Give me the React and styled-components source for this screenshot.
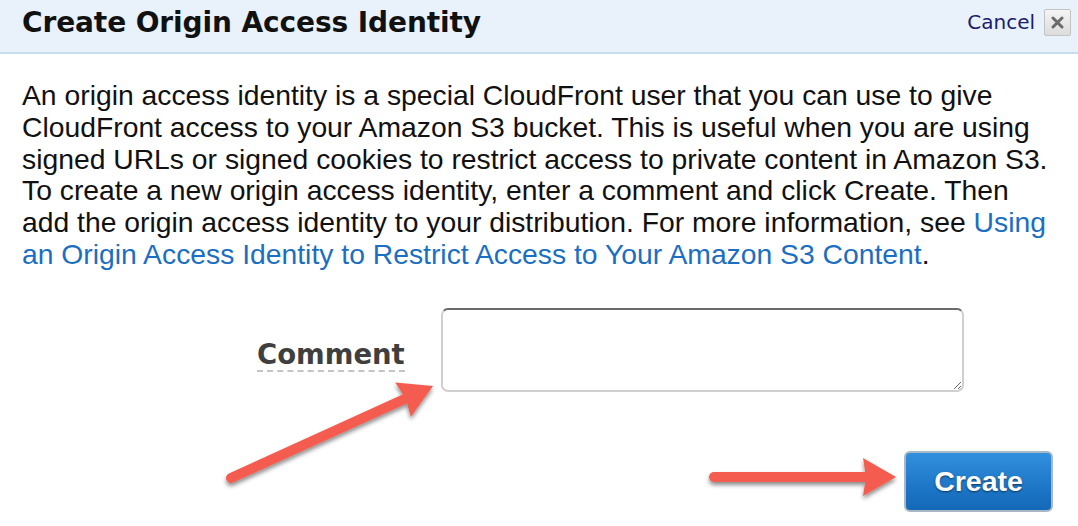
import React from 'react';
import styled, { createGlobalStyle } from 'styled-components';

const GlobalStyle = createGlobalStyle`
  html, body {
    margin: 0;
    padding: 0;
    background: #ffffff;
  }
  body {
    font-family: 'Liberation Sans', Arial, sans-serif;
  }
`;

const Dialog = styled.div`
  position: relative;
  width: 1078px;
  height: 526px;
  background: #ffffff;
  overflow: hidden;
`;

const Header = styled.div`
  box-sizing: border-box;
  display: flex;
  align-items: center;
  justify-content: space-between;
  height: 54px;
  padding: 0 7px 8px 22px;
  background: #e9f1fb;
  border-bottom: 2px solid #c9ddf1;
`;

const Title = styled.h1`
  margin: 0;
  font-family: 'DejaVu Sans', Verdana, sans-serif;
  font-size: 28px;
  font-weight: 700;
  color: #111;
  letter-spacing: -0.1px;
`;

const HeaderActions = styled.div`
  display: flex;
  align-items: center;
  gap: 9px;
`;

const CancelLink = styled.a`
  font-family: 'DejaVu Sans', Verdana, sans-serif;
  font-size: 20px;
  color: #1b1b6f;
  text-decoration: none;
  cursor: pointer;
`;

const CloseButton = styled.button`
  width: 27px;
  height: 27px;
  padding: 0;
  display: flex;
  align-items: center;
  justify-content: center;
  border: 1px solid #c3c3c3;
  border-radius: 2px;
  background: linear-gradient(#f4f4f4, #dcdcdc);
  cursor: pointer;
`;

const Body = styled.div`
  padding: 26px 22px 0 22px;
`;

const Description = styled.p`
  margin: 0;
  font-family: 'Liberation Sans', Helvetica, Arial, sans-serif;
  font-size: 28.3px;
  line-height: 31.8px;
  color: #111;
  white-space: nowrap;
`;

const DocLink = styled.a`
  color: #1a6fc2;
  text-decoration: none;
`;

const FormRow = styled.div`
  display: flex;
  align-items: center;
  gap: 36px;
  margin-top: 37px;
  padding-left: 235px;
`;

const Label = styled.label`
  font-family: 'DejaVu Sans', Verdana, sans-serif;
  font-size: 27.5px;
  font-weight: 700;
  color: #3f3f3f;
  border-bottom: 2px dashed #c4c4c4;
  line-height: 28px;
  padding-bottom: 2px;
  margin-top: 12px;
`;

const CommentBox = styled.textarea`
  box-sizing: border-box;
  width: 523px;
  height: 84px;
  border: 2px solid #cfcfcf;
  border-top-color: #6a6a6a;
  border-radius: 7px;
  background: #fff;
  resize: both;
  outline: none;
  font-family: 'Liberation Sans', Arial, sans-serif;
  font-size: 18px;
`;

const Actions = styled.div`
  display: flex;
  justify-content: flex-end;
  margin-top: 59px;
  padding-right: 3px;
`;

const CreateButton = styled.button`
  width: 149px;
  height: 61px;
  border: 2px solid #a9b8c6;
  border-radius: 6px;
  background: linear-gradient(#3290de, #1f78c8 55%, #1468b8);
  color: #fff;
  font-family: 'Liberation Sans', Helvetica, Arial, sans-serif;
  font-size: 28.5px;
  font-weight: 700;
  text-shadow: 0 1px 2px rgba(0, 0, 0, 0.55);
  cursor: pointer;
`;

const Annotation = styled.svg`
  position: absolute;
  left: 0;
  top: 0;
  pointer-events: none;
`;

function Arrow({ x1, y1, x2, y2 }) {
  const angle = Math.atan2(y2 - y1, x2 - x1);
  const head = 38;
  const spread = 0.52;
  const bx = x2 - Math.cos(angle) * (head - 8);
  const by = y2 - Math.sin(angle) * (head - 8);
  const lx = x2 - Math.cos(angle - spread) * head;
  const ly = y2 - Math.sin(angle - spread) * head;
  const rx = x2 - Math.cos(angle + spread) * head;
  const ry = y2 - Math.sin(angle + spread) * head;
  return (
    <g filter="url(#shadow)">
      <line x1={x1} y1={y1} x2={bx} y2={by} stroke="#f45b4f" strokeWidth="10" strokeLinecap="round" />
      <polygon points={`${x2},${y2} ${lx},${ly} ${bx},${by} ${rx},${ry}`} fill="#f45b4f" />
    </g>
  );
}

export default function App() {
  return (
    <Dialog>
      <GlobalStyle />
      <Header>
        <Title>Create Origin Access Identity</Title>
        <HeaderActions>
          <CancelLink>Cancel</CancelLink>
          <CloseButton aria-label="Close">
            <svg width="13" height="13" viewBox="0 0 13 13">
              <path d="M2 2 L11 11 M11 2 L2 11" stroke="#6b6b6b" strokeWidth="3" strokeLinecap="round" />
            </svg>
          </CloseButton>
        </HeaderActions>
      </Header>
      <Body>
        <Description>
          An origin access identity is a special CloudFront user that you can use to give
          <br />
          CloudFront access to your Amazon S3 bucket. This is useful when you are using
          <br />
          signed URLs or signed cookies to restrict access to private content in Amazon S3.
          <br />
          To create a new origin access identity, enter a comment and click Create. Then
          <br />
          add the origin access identity to your distribution. For more information, see{' '}
          <DocLink>Using</DocLink>
          <br />
          <DocLink>an Origin Access Identity to Restrict Access to Your Amazon S3 Content</DocLink>.
        </Description>
        <FormRow>
          <Label htmlFor="comment">Comment</Label>
          <CommentBox id="comment" />
        </FormRow>
        <Actions>
          <CreateButton>Create</CreateButton>
        </Actions>
      </Body>
      <Annotation width="1078" height="526">
        <defs>
          <filter id="shadow" x="-20%" y="-20%" width="140%" height="160%">
            <feDropShadow dx="0" dy="3" stdDeviation="2" floodColor="#000" floodOpacity="0.45" />
          </filter>
        </defs>
        <Arrow x1={231} y1={478} x2={433} y2={386} />
        <Arrow x1={714} y1={477} x2={896} y2={477} />
      </Annotation>
    </Dialog>
  );
}
